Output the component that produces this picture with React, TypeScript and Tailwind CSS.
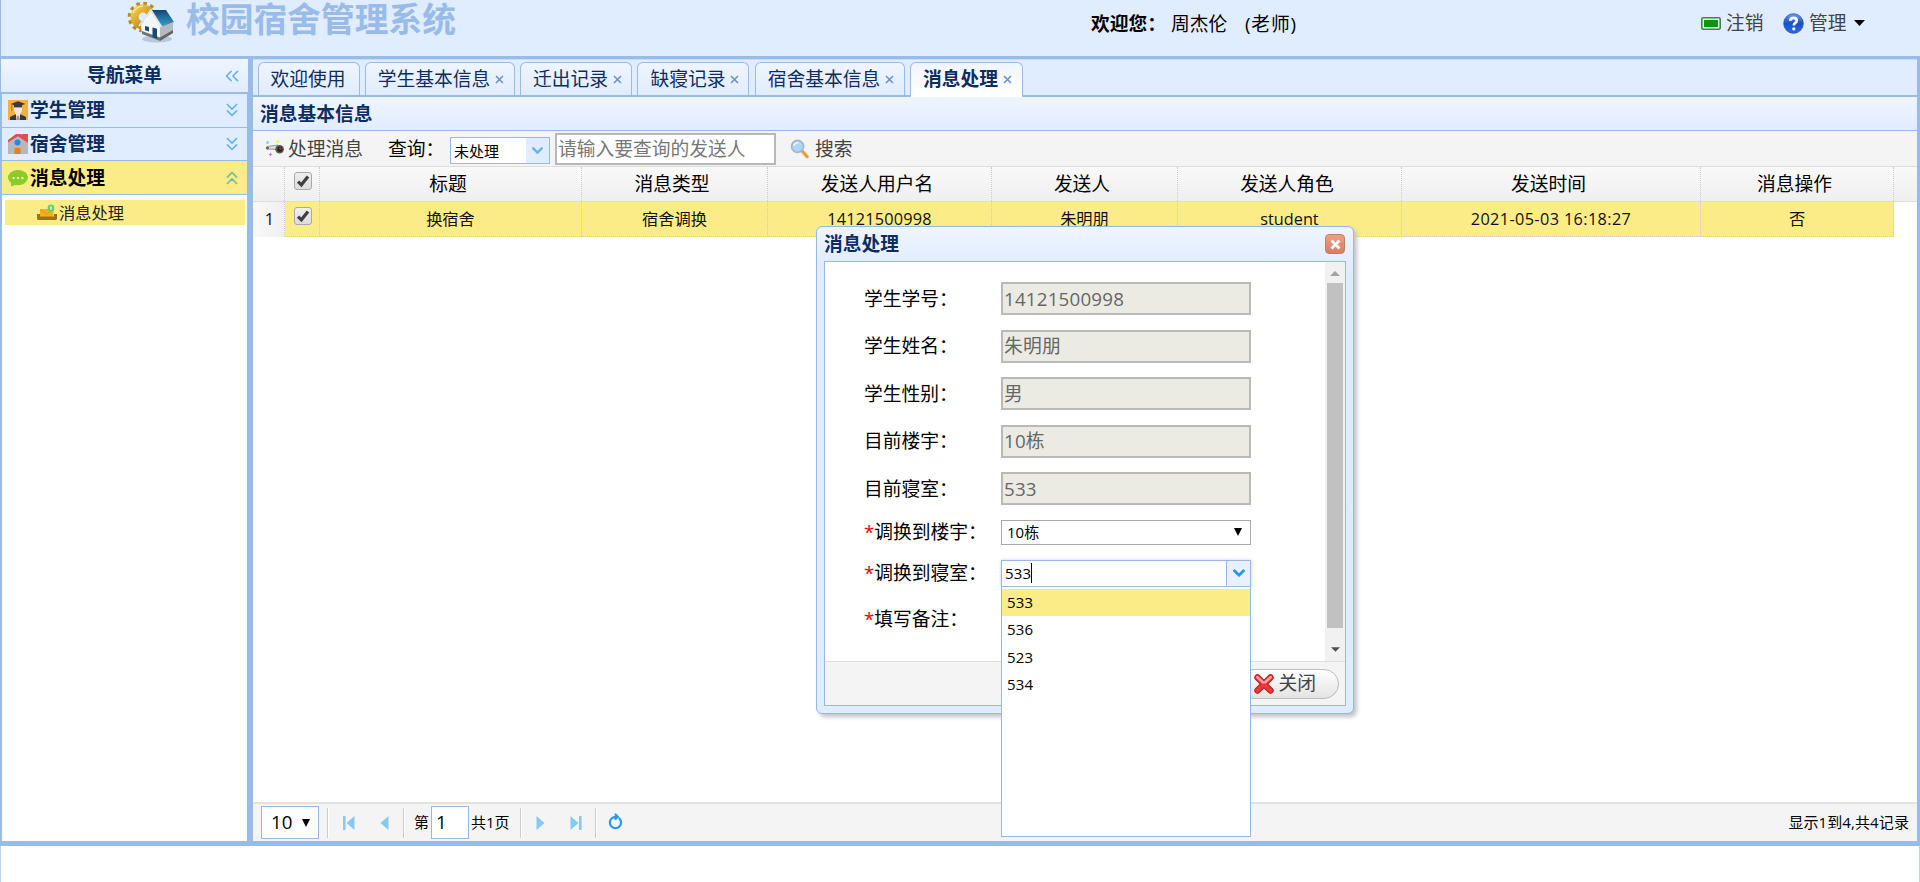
import { ChevronDown, ChevronsDown, ChevronsLeft, ChevronsUp, RotateCw } from "lucide-react";

const menus = [
  { title: "学生管理", icon: <StudentIcon />, active: false },
  { title: "宿舍管理", icon: <DormIcon />, active: false },
  { title: "消息处理", icon: <ChatIcon />, active: true },
];

const tabs = [
  { title: "欢迎使用", width: "w-[102px]", closable: false },
  { title: "学生基本信息", width: "w-[150px]", closable: true },
  { title: "迁出记录", width: "w-[112px]", closable: true },
  { title: "缺寝记录", width: "w-[112px]", closable: true },
  { title: "宿舍基本信息", width: "w-[150px]", closable: true },
  { title: "消息处理", width: "w-[113px]", closable: true, active: true },
];

const columns = [
  { title: "标题", value: "换宿舍", width: "w-[262px]" },
  { title: "消息类型", value: "宿舍调换", width: "w-[186px]" },
  { title: "发送人用户名", value: "14121500998", width: "w-[224px] tracking-[0.2px]" },
  { title: "发送人", value: "朱明朋", width: "w-[186px]" },
  { title: "发送人角色", value: "student", width: "w-[224px]" },
  { title: "发送时间", value: "2021-05-03 16:18:27", width: "w-[299px] tracking-[0.38px]" },
  { title: "消息操作", value: "否", width: "w-[193px]" },
];

const fields = [
  { label: "学生学号：", value: "14121500998" },
  { label: "学生姓名：", value: "朱明朋" },
  { label: "学生性别：", value: "男" },
  { label: "目前楼宇：", value: "10栋" },
  { label: "目前寝室：", value: "533" },
];

const rooms = ["533", "536", "523", "534"];

function LogoIcon() {
  return (
    <svg className="w-[48px] h-[44px]" viewBox="0 0 48 44">
      <defs>
        <linearGradient id="gear" x1="0" y1="0" x2="1" y2="1">
          <stop offset="0" stopColor="#f3c94a" />
          <stop offset="1" stopColor="#b07a10" />
        </linearGradient>
        <linearGradient id="roof" x1="0" y1="0" x2="0" y2="1">
          <stop offset="0" stopColor="#0d4a70" />
          <stop offset="1" stopColor="#3aa0cf" />
        </linearGradient>
      </defs>
      <ellipse cx="30" cy="39" rx="15" ry="3.5" fill="#9fb0c6" opacity="0.6" />
      <circle cx="16" cy="17" r="13" fill="none" stroke="#b98a1c" strokeWidth="4.6" strokeDasharray="3.4 3.4" />
      <circle cx="16" cy="17" r="8.4" fill="none" stroke="url(#gear)" strokeWidth="8" />
      <path d="M6 13 Q9 6.5 16 6" fill="none" stroke="#fbe48c" strokeWidth="1.6" />
      <path d="M14 25 L24 11 L34 26 L33 41 L15 34 Z" fill="#f3f5f7" />
      <path d="M33 25 L46 23 L46 33 L33 41 Z" fill="#b4babf" />
      <path d="M33 37.5 L46 30 L46 33 L33 41 L15 34 L15 31 Z" fill="#4b4742" opacity="0.75" />
      <path d="M24 10 L39 10 L47 22 L35 26.5 Z" fill="url(#roof)" />
      <path d="M12 26 L24 10 L34.5 27" fill="none" stroke="#dfe5ea" strokeWidth="1.8" />
      <path d="M18 26 l4 1 v4.5 l-4 -1.2 Z M25.5 27.5 l4.5 1.2 v10 l-4.5 -1.8 Z" fill="#174a72" />
    </svg>
  );
}

function StudentIcon() {
  return (
    <svg className="w-5 h-5 shrink-0" viewBox="0 0 20 20">
      <rect width="20" height="20" fill="#f6b13c" />
      <path d="M2 20 V17 L7 14.5 H13 L18 17 V20 Z" fill="#343a45" />
      <path d="M8 14 H12 L11.5 20 H8.5 Z" fill="#fff" />
      <rect x="9.4" y="15.5" width="1.2" height="4.5" fill="#c0392b" />
      <path d="M6 6 H14 V10 Q13 15 10 15 Q7 15 6 10 Z" fill="#f5e6d8" />
      <path d="M2.5 4 L10 1.2 L17.5 4 L10 6.6 Z" fill="#3b3b3b" />
      <path d="M6 5 H14 V7.4 H6 Z" fill="#3b3b3b" />
      <path d="M3.8 4.5 V11" stroke="#e0643c" strokeWidth="1.2" />
    </svg>
  );
}

function DormIcon() {
  return (
    <svg className="w-5 h-5 shrink-0" viewBox="0 0 20 20">
      <rect x="14" y="0" width="6" height="9" fill="#e04f4f" />
      <path d="M0 8 L10 1.5 L20 8 V20 H0 Z" fill="#b4b9c0" />
      <path d="M0 8.5 V6 L8 0 H13 L20 6 V9 L10 2.2 Z" fill="#e04f4f" />
      <circle cx="9.5" cy="8.5" r="3" fill="#2d87d3" />
      <rect x="6.5" y="14" width="6" height="6" fill="#e87e1c" />
    </svg>
  );
}

function ChatIcon() {
  return (
    <svg className="w-5 h-5 shrink-0" viewBox="0 0 20 20">
      <ellipse cx="10" cy="9.6" rx="10" ry="7.6" fill="#8dcb2b" />
      <path d="M3 14 L3 18.5 L9 16 Z" fill="#8dcb2b" />
      <circle cx="5.6" cy="10" r="1.1" fill="#fff" />
      <circle cx="10" cy="10" r="1.1" fill="#fff" />
      <circle cx="14.4" cy="10" r="1.1" fill="#fff" />
    </svg>
  );
}

function InboxIcon() {
  return (
    <svg className="w-5 h-5 shrink-0" viewBox="0 0 20 20">
      <path d="M3 6 H16.5 V14 H3 Z" fill="#f2b01e" />
      <path d="M3 6.5 L9.5 11 L16 6.5" fill="none" stroke="#dc9a16" />
      <path d="M0 11 H3 V13.5 H17 V11 H20 V15.5 Q20 17 18.5 17 H1.5 Q0 17 0 15.5 Z" fill="#a07018" />
      <circle cx="14" cy="5" r="3.4" fill="#5fd36b" />
      <path d="M14 3.4 V6.6" stroke="#fff" strokeWidth="1.4" />
    </svg>
  );
}

function CameraIcon() {
  return (
    <svg className="w-5 h-5" viewBox="0 0 20 20">
      <path d="M2 7.5 L13 6 V10.5 L2 10 Z" fill="#dcdcdc" stroke="#777" strokeWidth="0.7" />
      <rect x="0.8" y="7.8" width="3.2" height="2.6" rx="1.3" fill="#666" />
      <circle cx="14.6" cy="10.2" r="4.3" fill="#5a5a5a" />
      <circle cx="14.8" cy="10.2" r="2.6" fill="#1d2a22" />
      <circle cx="15.4" cy="9.6" r="1.2" fill="#c0392b" />
      <path d="M10 3.5 L13.5 0.5 L14.5 4 Z" fill="#f5ec6e" />
      <circle cx="2.5" cy="3.5" r="1.5" fill="#5fe3e8" />
      <path d="M5.5 13.8 V17.2 M3.8 15.5 H7.2" stroke="#d07af0" strokeWidth="1.2" />
    </svg>
  );
}

function SearchIcon() {
  return (
    <svg className="w-5 h-5" viewBox="0 0 20 20">
      <path d="M12.5 12.5 L17.2 17.6" stroke="#ee9a35" strokeWidth="3.2" strokeLinecap="round" />
      <circle cx="7.6" cy="7.4" r="6" fill="#a9d6fb" stroke="#a3b4cc" strokeWidth="1.6" />
      <path d="M3.8 6.6 Q5 3.4 8.6 3.6" fill="none" stroke="#e6f4ff" strokeWidth="1.8" />
    </svg>
  );
}

function HelpIcon() {
  return (
    <svg className="w-[21px] h-[21px]" viewBox="0 0 21 21">
      <defs>
        <linearGradient id="help" x1="0" y1="0" x2="0" y2="1">
          <stop offset="0" stopColor="#6a9cf0" />
          <stop offset="0.5" stopColor="#1a4fc8" />
          <stop offset="1" stopColor="#2c6be6" />
        </linearGradient>
      </defs>
      <circle cx="10.5" cy="10.5" r="9.8" fill="url(#help)" stroke="#2453b0" strokeWidth="0.8" />
      <path d="M7.2 7.8 Q7.4 4.9 10.6 4.9 Q13.8 5 13.8 7.6 Q13.8 9.1 12.2 10 Q10.8 10.8 10.8 12.6" fill="none" stroke="#fff" strokeWidth="2.6" />
      <circle cx="10.8" cy="15.8" r="1.6" fill="#fff" />
    </svg>
  );
}

function CancelIcon() {
  return (
    <svg className="w-5 h-5" viewBox="0 0 20 20">
      <path d="M3.5 3.5 L16.5 16.5 M16.5 3.5 L3.5 16.5" stroke="#c01818" strokeWidth="6.4" strokeLinecap="round" />
      <path d="M3.5 3.5 L16.5 16.5 M16.5 3.5 L3.5 16.5" stroke="#ea3a3a" strokeWidth="4.4" strokeLinecap="round" />
      <path d="M3.4 3.2 L9 8.4 M16.6 3.2 L11 8.4" stroke="#f6a0a0" strokeWidth="2.6" strokeLinecap="round" />
    </svg>
  );
}

function Checkbox() {
  return (
    <span className="flex w-[18px] h-[18px] items-center justify-center rounded-[3px] border border-[#a9a9a9] bg-linear-to-b from-[#f0f0f0] to-[#dcdcdc]">
      <svg className="w-3.5 h-3.5" viewBox="0 0 14 14">
        <path d="M2 7.6 L5.4 10.8 L12 2.4" fill="none" stroke="#404040" strokeWidth="3.2" />
      </svg>
    </span>
  );
}

function Header() {
  return (
    <header className="flex h-14 shrink-0 border-l border-[#99bbe8] bg-[#e0ecff] leading-none">
      <div className="w-[185px] pl-[126px]">
        <LogoIcon />
      </div>
      <h1 className="w-[905px] text-[33.75px] leading-[38px] font-bold text-[#99bbe8]">校园宿舍管理系统</h1>
      <div className="flex h-[49px] w-[610px] items-center text-black">
        <span className="w-[80px] whitespace-nowrap font-bold">欢迎您：</span>
        <span className="w-[74px]">周杰伦</span>
        <span className="tracking-[0.8px]">(老师)</span>
      </div>
      <div className="flex h-[46px] items-center text-[#444]">
        <svg className="mr-[5px] w-5 h-[13px]" viewBox="0 0 20 13">
          <rect x="0.8" y="0.8" width="18.4" height="11.4" rx="1.5" fill="#fff" stroke="#3b7f4b" strokeWidth="1.6" />
          <rect x="3" y="3" width="14" height="7" fill="#119311" />
        </svg>
        <span className="w-[57px]">注销</span>
        <HelpIcon />
        <span className="ml-[5px] w-[45px]">管理</span>
        <svg className="w-[11px] h-[6px]" viewBox="0 0 11 6">
          <path d="M0 0 H11 L5.5 6 Z" fill="#000" />
        </svg>
      </div>
    </header>
  );
}

function Sidebar() {
  return (
    <aside className="flex w-[248px] shrink-0 flex-col border-l border-[#99bbe8] bg-white">
      <div className="flex h-[34px] items-center border-b border-[#99bbe8] bg-linear-to-b from-[#eff5ff] to-[#e0ecff] text-[#0e2d5f]">
        <span className="ml-[86px] w-[134px] font-bold">导航菜单</span>
        <ChevronsLeft className="w-[22px] h-[22px] text-[#66b3f0]" strokeWidth={1.8} />
      </div>
      <div className="flex flex-1 flex-col border-x border-t border-[#99bbe8]">
        {menus.map((m) => (
          <div
            key={m.title}
            className={`flex h-[33.7px] shrink-0 items-center border-b border-[#99bbe8] pl-[6px] pr-[4px] font-bold ${
              m.active ? "bg-[#fbec88] text-black" : "bg-[#e0ecff] text-[#0e2d5f]"
            }`}
          >
            {m.icon}
            <span className="ml-[2px] flex-1 pt-px">{m.title}</span>
            {m.active ? (
              <ChevronsUp className="w-[22px] h-[22px] text-[#78b89a]" strokeWidth={1.8} />
            ) : (
              <ChevronsDown className="w-[22px] h-[22px] text-[#66b3f0]" strokeWidth={1.8} />
            )}
          </div>
        ))}
        <div className="p-[3px] pt-[5px] pr-[2px]">
          <div className="flex h-[25px] items-center gap-[2px] bg-[#fbec88] pl-8 text-[16.25px] text-[#222]">
            <InboxIcon />
            <span className="pt-[2px]">消息处理</span>
          </div>
        </div>
      </div>
    </aside>
  );
}

function Tabs() {
  return (
    <div className="flex h-[38px] shrink-0 items-end gap-[5.3px] border-t border-b-2 border-t-[#c6dbf8] border-b-[#99bbe8] bg-[#e0ecff] pl-[4.5px]">
      {tabs.map((t) => (
        <div
          key={t.title}
          className={`flex shrink-0 items-center gap-[5px] rounded-t-[6px] border border-b-0 border-[#99bbe8] pl-[12px] text-[#0e2d5f] ${t.width} ${
            t.active
              ? "-mb-[2px] h-[35px] bg-linear-to-b from-[#eff5ff] to-white pb-[2px] font-bold"
              : "h-[33px] bg-linear-to-b from-[#eff5ff] to-[#e0ecff]"
          }`}
        >
          <span className="whitespace-nowrap">{t.title}</span>
          {t.closable && (
            <svg className="w-[9px] h-[9px] shrink-0" viewBox="0 0 9 9">
              <path d="M1 1 L8 8 M8 1 L1 8" stroke="#6a8fc5" strokeWidth="1.5" />
            </svg>
          )}
        </div>
      ))}
    </div>
  );
}

function Toolbar() {
  return (
    <div className="flex h-9 shrink-0 items-center border-b border-[#ddd] bg-[#f4f4f4] pl-[12px]">
      <CameraIcon />
      <span className="ml-[3px] w-[100px] pt-px text-[#444]">处理消息</span>
      <span className="w-[62px] shrink-0 whitespace-nowrap pt-px text-black">查询：</span>
      <div className="mt-[4px] flex h-[27px] w-[100px] items-center border border-[#95b8e7] bg-white pl-[3px] text-[15px] text-black">
        <span className="flex-1 pt-[2px]">未处理</span>
        <span className="flex h-full w-[23px] items-center justify-center bg-[#e0ecff]">
          <ChevronDown className="w-[17px] h-[17px] text-[#66b3f0]" strokeWidth={3.5} />
        </span>
      </div>
      <div className="ml-[5px] flex h-8 w-[221px] items-center border-2 border-[#b8b8b8] bg-white pl-[1px] pt-px text-[#777]">
        请输入要查询的发送人
      </div>
      <span className="ml-[14px] mr-[5px]">
        <SearchIcon />
      </span>
      <span className="pt-px text-[#444]">搜索</span>
    </div>
  );
}

function Grid() {
  return (
    <div className="flex-1 bg-white">
      <div className="flex h-[35px] border-b border-[#ddd] bg-linear-to-b from-[#f9f9f9] to-[#efefef] text-black">
        <div className="w-[32px] border-r border-dotted border-[#ccc]" />
        <div className="flex w-[35px] justify-center border-r border-dotted border-[#ccc] pl-px pt-[5px]">
          <Checkbox />
        </div>
        {columns.map((c) => (
          <div
            key={c.title}
            className={`flex items-center justify-center border-r border-dotted border-[#ccc] pr-[5px] ${c.width}`}
          >
            <span className="tracking-normal">{c.title}</span>
          </div>
        ))}
      </div>
      <div className="flex h-[35px] text-[16.25px] text-[#111]">
        <div className="flex w-[32px] items-center justify-center border-r border-dotted border-[#ccc] bg-linear-to-r from-[#f9f9f9] to-[#efefef] pl-[2px]">
          1
        </div>
        <div className="flex w-[35px] justify-center border-r border-b border-dotted border-[#ccc] bg-[#fbec88] pl-px pt-[5px]">
          <Checkbox />
        </div>
        {columns.map((c) => (
          <div
            key={c.title}
            className={`flex items-center justify-center border-r border-b border-dotted border-[#ccc] bg-[#fbec88] ${c.width}`}
          >
            {c.value}
          </div>
        ))}
      </div>
    </div>
  );
}

function Separator() {
  return <div className="h-[30px] w-[2px] border-l border-r border-l-[#ccc] border-r-white" />;
}

function Pager() {
  return (
    <div className="flex h-[39px] shrink-0 items-center border-t-2 border-[#e2e2e2] bg-[#f4f4f4] pl-[8px] pr-[8px] text-[15px] text-black">
      <div className="flex h-[33px] w-[58px] items-center border border-[#95b8e7] bg-white pl-[9px] pr-2 text-[18.75px]">
        <span className="flex-1">10</span>
        <svg className="w-2 h-2" viewBox="0 0 8 8">
          <path d="M0 0 H8 L4 8 Z" fill="#000" />
        </svg>
      </div>
      <div className="ml-[8px]">
        <Separator />
      </div>
      <svg className="ml-[14px] w-[12px] h-[14px]" viewBox="0 0 12 14">
        <path d="M0 0 H2.6 V14 H0 Z M11.5 0 V14 L3.5 7 Z" fill="#88c8f4" />
      </svg>
      <svg className="ml-[25px] mr-[14px] w-[9px] h-[14px]" viewBox="0 0 9 14">
        <path d="M8.5 0 V14 L0.5 7 Z" fill="#88c8f4" />
      </svg>
      <Separator />
      <span className="ml-[9px] mr-[2px]">第</span>
      <div className="flex h-[33px] w-[38px] items-center border border-[#95b8e7] bg-white pl-[4px] text-[18.75px]">1</div>
      <span className="ml-[2px] w-[49px]">共1页</span>
      <Separator />
      <svg className="ml-[14px] w-[9px] h-[14px]" viewBox="0 0 9 14">
        <path d="M0.5 0 V14 L8.5 7 Z" fill="#88c8f4" />
      </svg>
      <svg className="ml-[25px] mr-[13px] w-[12px] h-[14px]" viewBox="0 0 12 14">
        <path d="M9 0 H11.6 V14 H9 Z M0.5 0 V14 L8.5 7 Z" fill="#88c8f4" />
      </svg>
      <Separator />
      <RotateCw className="ml-[11px] w-[15px] h-[15px] -rotate-45 text-[#2b9be8]" strokeWidth={3.6} />
      <span className="ml-auto tracking-[0.1px]">显示1到4,共4记录</span>
    </div>
  );
}

function RoomDropdown() {
  return (
    <div className="absolute left-[-1px] top-[25px] h-[251px] w-[250px] border border-[#95b8e7] bg-white pt-[2px] text-[15px] text-black">
      {rooms.map((r, i) => (
        <div key={r} className={`flex h-[27.5px] items-center pl-[5px] tracking-[0.2px] ${i === 0 ? "bg-[#fbec88]" : ""}`}>
          {r}
        </div>
      ))}
    </div>
  );
}

function MessageDialog() {
  return (
    <div className="absolute left-[816px] top-[226px] h-[488px] w-[538px] rounded-[6px] border border-[#95b8e7] bg-[#e0ecff] bg-linear-to-b from-[#eff5ff] to-[#e0ecff] to-[40px] px-[7px] shadow-[3px_3px_4px_#c4c4c4]">
      <div className="flex h-[34px] items-center justify-between">
        <span className="pt-px font-bold text-[#0e2d5f]">消息处理</span>
        <span className="mr-[1px] flex h-[20px] w-[20px] items-center justify-center rounded-[4px] border border-[#c08068] bg-linear-to-b from-[#f0a084] to-[#d97b62]">
          <svg className="w-[11px] h-[11px]" viewBox="0 0 11 11">
            <path d="M1.5 1.5 L9.5 9.5 M9.5 1.5 L1.5 9.5" stroke="#fff" strokeWidth="2.8" />
          </svg>
        </span>
      </div>
      <div className="flex h-[445px] flex-col border border-[#95b8e7] bg-white">
        <div className="flex h-[399px] justify-between">
          <div className="flex flex-col pl-[39px] pt-[20px] text-black">
            {fields.map((f) => (
              <div key={f.label} className="mb-[14.5px] flex h-[33px] items-center">
                <span className="w-[137px] pt-px">{f.label}</span>
                <span className="flex h-[33px] w-[250px] items-center border-2 border-[#b9b9b6] bg-[#ebebe4] pl-[1px] pt-px tracking-[0.2px] text-[#666]">
                  {f.value}
                </span>
              </div>
            ))}
            <div className="mb-[15px] flex h-[25px] items-center">
              <span className="w-[137px] whitespace-nowrap pt-px">
                <b className="font-normal text-red-600">*</b>调换到楼宇：
              </span>
              <span className="flex h-[25px] w-[250px] items-center justify-between border border-[#a9a9a9] pl-[5px] pr-2 text-[15px]">
                10栋
                <svg className="w-2 h-2" viewBox="0 0 8 8">
                  <path d="M0 0 H8 L4 8 Z" fill="#000" />
                </svg>
              </span>
            </div>
            <div className="flex h-[27px] items-center">
              <span className="w-[137px] whitespace-nowrap pt-px">
                <b className="font-normal text-red-600">*</b>调换到寝室：
              </span>
              <div className="relative flex h-[27px] w-[250px] items-center border border-[#95b8e7] text-[15px] shadow-[0_0_3px_#bcd0ee]">
                <span className="ml-[3px] flex h-5 items-center border-r border-black tracking-[0.2px]">533</span>
                <span className="ml-auto flex h-full w-[24px] items-center justify-center border-l border-[#95b8e7] bg-[#e9f1ff]">
                  <ChevronDown className="w-[18px] h-[18px] text-[#2b9be8]" strokeWidth={4} />
                </span>
                <RoomDropdown />
              </div>
            </div>
            <div className="mt-[18px] flex h-[30px] items-center">
              <span>
                <b className="font-normal text-red-600">*</b>填写备注：
              </span>
            </div>
          </div>
          <div className="flex w-[20px] flex-col items-center bg-[#f1f1f1] pb-[9px] pt-[9px]">
            <svg className="w-[10px] h-[5px] shrink-0" viewBox="0 0 10 5">
              <path d="M0 5 H10 L5 0 Z" fill="#a3a3a3" />
            </svg>
            <div className="mt-[7px] h-[345px] w-[16px] bg-[#c1c1c1]" />
            <svg className="mt-auto w-[9px] h-[5px] shrink-0" viewBox="0 0 10 5">
              <path d="M0 0 H10 L5 5 Z" fill="#505050" />
            </svg>
          </div>
        </div>
        <div className="flex flex-1 items-center justify-end border-t border-[#ddd] bg-[#f4f4f4] pr-[6px]">
          <div className="flex h-[30px] w-[100px] items-center justify-end gap-[5px] rounded-full border border-[#bbb] bg-linear-to-b from-white to-[#e4e4e4] pr-[22px] text-[#444]">
            <CancelIcon />
            关闭
          </div>
        </div>
      </div>
    </div>
  );
}

export default function App() {
  return (
    <div className="relative flex h-[882px] w-[1920px] flex-col bg-white font-['Open_Sans','Noto_Sans_CJK_SC',sans-serif] text-[18.75px] leading-none">
      <Header />
      <div className="flex h-[790px] shrink-0 border-t-3 border-b-5 border-[#99bbe8]">
        <Sidebar />
        <div className="w-[5px] shrink-0 bg-[#99bbe8]" />
        <main className="flex flex-1 flex-col border-r-3 border-[#99bbe8] bg-white">
          <Tabs />
          <div className="flex h-[34px] shrink-0 items-center border-b border-[#95b8e7] bg-linear-to-b from-[#eff5ff] to-[#e0ecff] pl-[7px] pt-[2px] font-bold text-[#0e2d5f]">
            消息基本信息
          </div>
          <Toolbar />
          <Grid />
          <Pager />
        </main>
      </div>
      <div className="flex-1 border-x border-[#b9d0f0]" />
      <MessageDialog />
    </div>
  );
}
